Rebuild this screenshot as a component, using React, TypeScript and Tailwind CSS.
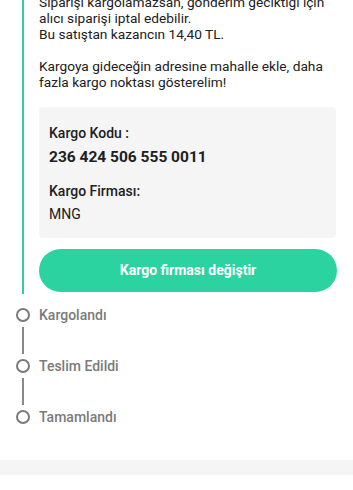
export default function App() {
  const steps = ['Kargolandı', 'Teslim Edildi', 'Tamamlandı'];

  return (
    <div className="w-[353px] h-[490px] overflow-hidden bg-white font-['Roboto',sans-serif] text-[#202020]">
      {/* active step: rail + details */}
      <div className="flex mt-[-6px] pl-4 pr-4">
        <div className="w-[14px] flex justify-center shrink-0">
          <div className="w-[2px] bg-[#2fcf9f]" />
        </div>
        <div className="flex-1 pl-[9px] pb-[2px]">
          <p className="text-[13.7px] leading-[16px]">
            Siparişi kargolamazsan, gönderim geciktiği için
            <br />
            alıcı siparişi iptal edebilir.
            <br />
            Bu satıştan kazancın 14,40 TL.
          </p>
          <p className="text-[13.7px] leading-[16px] mt-[16px]">
            Kargoya gideceğin adresine mahalle ekle, daha
            <br />
            fazla kargo noktası gösterelim!
          </p>

          <div className="mt-[17px] mr-[1px] bg-[#f5f5f5] rounded-[4px] px-[10px] pt-[18px] pb-[16px]">
            <div className="text-[14px] leading-[16px] font-medium">Kargo Kodu :</div>
            <div className="text-[15.5px] leading-[20px] font-bold mt-[6px]">236 424 506 555 0011</div>
            <div className="text-[14px] leading-[16px] font-medium mt-[16px]">Kargo Firması:</div>
            <div className="text-[14px] leading-[16px] mt-[7px]">MNG</div>
          </div>

          <button className="mt-[11px] w-full h-[43px] rounded-full bg-[#2bd3a0] text-white text-[14px] font-bold">
            Kargo firması değiştir
          </button>
        </div>
      </div>

      {/* pending steps */}
      <div className="pl-4 mt-[14px]">
        {steps.map((s, i) => (
          <div key={s}>
            {i > 0 && (
              <div className="w-[14px] flex justify-center my-[5px]">
                <div className="w-[2px] h-[27px] bg-[#8a8a8a]" />
              </div>
            )}
            <div className="flex items-center h-[14px]">
              <div className="w-[14px] flex justify-center shrink-0">
                <div className="w-[14px] h-[14px] rounded-full border-2 border-[#7a7a7a]" />
              </div>
              <span className="pl-[9px] text-[14px] leading-[16px] font-medium text-[#7a7a7a]">{s}</span>
            </div>
          </div>
        ))}
      </div>

      <div className="mt-[36px] h-[15px] bg-[#f5f5f5]" />
    </div>
  );
}
